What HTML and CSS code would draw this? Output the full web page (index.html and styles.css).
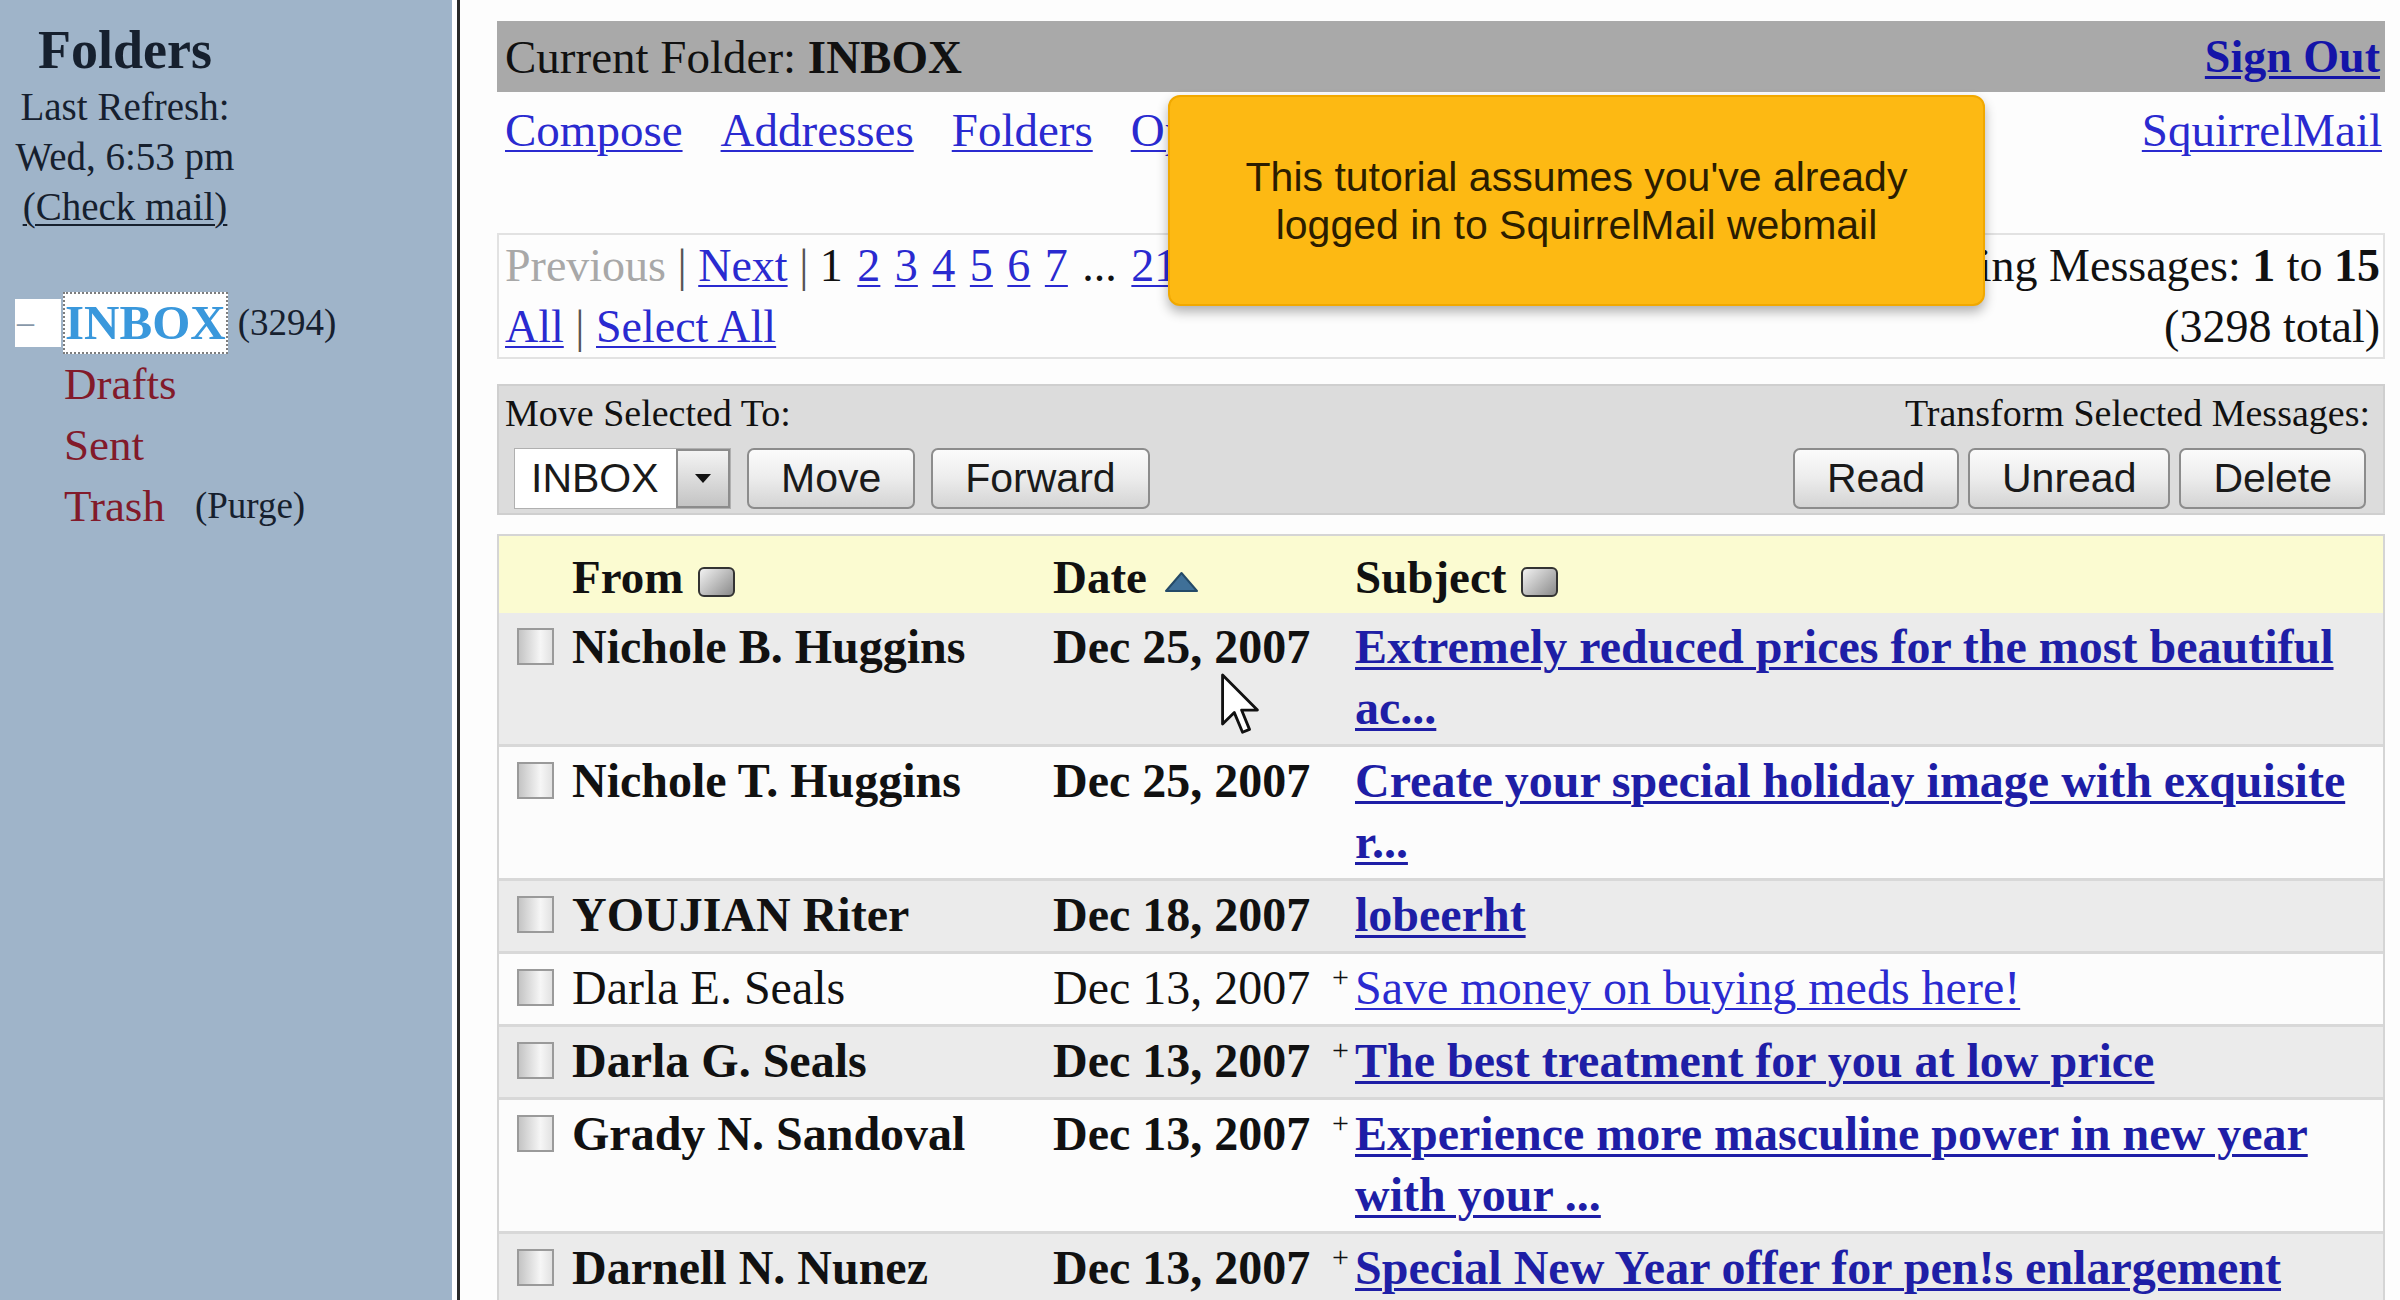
FILE: index.html
```html
<!DOCTYPE html>
<html lang="en">

<head>
    <meta charset="UTF-8">
    <title>SquirrelMail - INBOX</title>
    <link rel="stylesheet" href="styles.css">
</head>

<body>
    <div class="sidebar">
        <div class="sidebar-head">
            <div class="sidebar-title">Folders</div>
            <div class="sidebar-line">Last Refresh:</div>
            <div class="sidebar-line">Wed, 6:53 pm</div>
            <div class="sidebar-line"><a class="check" href="#">(Check mail)</a></div>
        </div>

        <div class="folders">
            <div class="folder folder-current">
                <span class="collapse">&ndash;</span>
                <span class="inbox">INBOX</span>
                <span class="count">(3294)</span>
            </div>
            <div class="folder">Drafts</div>
            <div class="folder">Sent</div>
            <div class="folder">Trash <span class="count purge">(Purge)</span></div>
        </div>
    </div>
    <div class="rule"></div>

    <div class="main">
        <div class="titlebar">
            <span>Current Folder: <b>INBOX</b></span>
            <a class="signout" href="#">Sign Out</a>
        </div>

        <div class="nav">
            <div class="nav-links">
                <a href="#">Compose</a>
                <a href="#">Addresses</a>
                <a href="#">Folders</a>
                <a href="#">Options</a>
                <a href="#">Search</a>
                <a href="#">Help</a>
            </div>
            <a href="#">SquirrelMail</a>
        </div>

        <div class="pager">
            <div class="pager-left">
                <span class="dim">Previous</span> <span class="sep">|</span> <a href="#">Next</a> <span class="sep">|</span>
                <span class="pages">1 <a href="#">2</a> <a href="#">3</a> <a href="#">4</a> <a href="#">5</a> <a href="#">6</a> <a href="#">7</a>
                ... <a href="#">219</a></span> <span class="sep">|</span> <a href="#">Show</a><br>
                <a href="#">All</a> <span class="sep">|</span> <a href="#">Select All</a>
            </div>
            <div class="pager-right">
                Viewing Messages: <b>1</b> to <b>15</b><br>
                (3298 total)
            </div>
        </div>

        <div class="actions">
            <div class="actions-left">
                <div class="label">Move Selected To:</div>
                <div class="controls">
                    <div class="select">
                        <span class="select-value">INBOX</span>
                        <span class="select-arrow"><span class="caret"></span></span>
                    </div>
                    <button>Move</button>
                    <button>Forward</button>
                </div>
            </div>
            <div class="actions-right">
                <div class="label">Transform Selected Messages:</div>
                <div class="controls controls-right">
                    <button>Read</button>
                    <button>Unread</button>
                    <button>Delete</button>
                </div>
            </div>
        </div>

        <div class="msglist">
            <div class="row head">
                <div></div>
                <div>From <span class="sort-box"></span></div>
                <div>Date <svg class="sort-up" width="37" height="24" viewBox="0 0 37 24"><polygon points="18.5,3 34,21 3,21" fill="#3f7098" stroke="#244a68" stroke-width="2" stroke-linejoin="round"/></svg></div>
                <div>Subject <span class="sort-box"></span></div>
            </div>

            <div class="row odd unseen">
                <div><span class="cb"></span></div>
                <div>Nichole B. Huggins</div>
                <div>Dec 25, 2007</div>
                <div><a href="#">Extremely reduced prices for the most beautiful ac...</a></div>
            </div>
            <div class="row even unseen">
                <div><span class="cb"></span></div>
                <div>Nichole T. Huggins</div>
                <div>Dec 25, 2007</div>
                <div><a href="#">Create your special holiday image with exquisite r...</a></div>
            </div>
            <div class="row odd unseen">
                <div><span class="cb"></span></div>
                <div>YOUJIAN Riter</div>
                <div>Dec 18, 2007</div>
                <div><a href="#">lobeerht</a></div>
            </div>
            <div class="row even">
                <div><span class="cb"></span></div>
                <div>Darla E. Seals</div>
                <div>Dec 13, 2007<span class="att">+</span></div>
                <div><a href="#">Save money on buying meds here!</a></div>
            </div>
            <div class="row odd unseen">
                <div><span class="cb"></span></div>
                <div>Darla G. Seals</div>
                <div>Dec 13, 2007<span class="att">+</span></div>
                <div><a href="#">The best treatment for you at low price</a></div>
            </div>
            <div class="row even unseen">
                <div><span class="cb"></span></div>
                <div>Grady N. Sandoval</div>
                <div>Dec 13, 2007<span class="att">+</span></div>
                <div><a href="#">Experience more masculine power in new year with your ...</a></div>
            </div>
            <div class="row odd unseen">
                <div><span class="cb"></span></div>
                <div>Darnell N. Nunez</div>
                <div>Dec 13, 2007<span class="att">+</span></div>
                <div><a href="#">Special New Year offer for pen!s enlargement</a></div>
            </div>
        </div>
    </div>

    <!-- tutorial callout over the page -->
    <div class="tip">This tutorial assumes you've already<br>logged in to SquirrelMail webmail</div>

    <svg class="pointer" width="38" height="64" viewBox="0 0 12 20">
        <path d="M0.5,0.5 L0.5,16 L4.2,12.4 L6.8,18.6 L9,17.7 L6.5,11.6 L11.5,11.6 Z" fill="#fff" stroke="#111" stroke-width="0.9" stroke-linejoin="round"/>
    </svg>
</body>

</html>
```

FILE: styles.css
```css
body {
    margin: 0;
    height: 1300px;
    overflow: hidden;
    display: flex;
    background: #fdfdfd;
    font-family: "Liberation Serif", "Times New Roman", serif;
    color: #111;
}

a {
    color: #2a2ad0;
    text-decoration: underline;
    text-decoration-thickness: 2px;
    text-underline-offset: 4px;
}

/* left frame */

.sidebar {
    width: 452px;
    flex: none;
    background: #9fb4c9;
    border-right: 5px solid #fff;
    color: #16202e;
}

.rule {
    width: 3px;
    flex: none;
    background: #2a2a2a;
}

.sidebar-head {
    width: 250px;
    text-align: center;
    padding-top: 20px;
}

.sidebar-title {
    font-size: 54px;
    font-weight: bold;
    line-height: 60px;
    margin-bottom: 2px;
}

.sidebar-line {
    font-size: 39px;
    line-height: 50px;
}

.check {
    color: #16202e;
}

.folders {
    margin-top: 60px;
}

.folder {
    display: flex;
    align-items: center;
    height: 61px;
    padding-left: 64px;
    font-size: 45px;
    color: #821a2a;
}

.folder-current {
    padding-left: 15px;
}

.collapse {
    width: 46px;
    height: 48px;
    line-height: 46px;
    background: #fff;
    color: #8797a8;
    font-size: 34px;
    padding-left: 2px;
    box-sizing: border-box;
}

.inbox {
    margin-left: 2px;
    border: 2px dotted #7d7d7d;
    background: #fff;
    color: #3a98dc;
    font-weight: bold;
    font-size: 49px;
    line-height: 58px;
}

.count {
    margin-left: 10px;
    font-size: 37px;
    color: #16202e;
}

.purge {
    margin-left: 30px;
}

/* right frame */

.main {
    flex: 1;
    padding: 21px 15px 0 37px;
}

.titlebar {
    display: flex;
    justify-content: space-between;
    align-items: center;
    height: 71px;
    padding: 0 5px 0 8px;
    background: #a9a9a9;
    font-size: 47px;
}

.signout {
    font-weight: bold;
    font-size: 46px;
    color: #1414a8;
    text-decoration-thickness: 3px;
}

.nav {
    display: flex;
    justify-content: space-between;
    height: 56px;
    line-height: 56px;
    padding: 10px 3px 0 8px;
    margin-bottom: 75px;
    font-size: 47px;
}

.nav-links {
    display: flex;
    gap: 38px;
}

.pager {
    display: flex;
    justify-content: space-between;
    border: 2px solid #e2e2e2;
    padding: 0 3px 0 6px;
    font-size: 46px;
    line-height: 61px;
}

.pages {
    word-spacing: 3px;
}

.pager-right {
    text-align: right;
}

.dim {
    color: #a8a8a8;
}

.sep {
    color: #555;
}

.actions {
    display: flex;
    justify-content: space-between;
    margin-top: 25px;
    padding: 4px 13px 4px 6px;
    background: #dcdcdc;
    border: 2px solid #cfcfcf;
}

.label {
    font-size: 38px;
    line-height: 46px;
}

.actions-right {
    text-align: right;
}

.controls {
    display: flex;
    gap: 16px;
    margin-top: 12px;
    margin-left: 9px;
}

.controls-right {
    gap: 9px;
    justify-content: flex-end;
    margin-right: 4px;
}

button {
    height: 61px;
    padding: 0 32px;
    border: 2px solid #8c8c8c;
    border-radius: 7px;
    background: linear-gradient(#fbfbfb, #ececec 50%, #d4d4d4);
    font-family: "Liberation Sans", Arial, sans-serif;
    font-size: 41px;
    color: #1a1a1a;
}

.select {
    display: flex;
    height: 61px;
    border: 1px solid #b0b0b0;
    background: #fff;
    box-sizing: border-box;
    font-family: "Liberation Sans", Arial, sans-serif;
    font-size: 41px;
}

.select-value {
    width: 161px;
    padding-left: 16px;
    line-height: 59px;
    box-sizing: border-box;
    color: #1a1a1a;
}

.select-arrow {
    width: 54px;
    display: flex;
    align-items: center;
    justify-content: center;
    border: 2px solid #8c8c8c;
    background: linear-gradient(#f4f4f4, #c4c4c4);
    box-sizing: border-box;
}

.caret {
    width: 0;
    height: 0;
    border-left: 8px solid transparent;
    border-right: 8px solid transparent;
    border-top: 9px solid #111;
}

/* message list */

.msglist {
    margin-top: 19px;
    border: 2px solid #d5d5d5;
    border-bottom: none;
}

.row {
    display: grid;
    grid-template-columns: 69px 481px 302px 1fr;
    font-size: 48px;
    line-height: 61px;
    padding: 3px 0 6px;
    border-bottom: 3px solid #d8d8d8;
}

.row > div + div {
    padding-left: 4px;
}

.row > div:last-child {
    padding-right: 4px;
}

.head {
    background: #fbfbd1;
    font-weight: bold;
    font-size: 47px;
    padding: 11px 0 5px;
    border-bottom: none;
}

.odd {
    background: #ebebeb;
}

.even {
    background: #fcfcfc;
}

.unseen {
    font-weight: bold;
}

.row a {
    color: #2a2ad0;
}

.unseen a {
    color: #1e1ea6;
    text-decoration-thickness: 3px;
}

.sort-box {
    display: inline-block;
    width: 33px;
    height: 26px;
    margin-left: 3px;
    vertical-align: middle;
    border: 2px solid #333;
    border-radius: 6px;
    background: linear-gradient(135deg, #f2f2f2, #8a8a8a);
}

.sort-up {
    margin-left: 4px;
    vertical-align: middle;
}

.cb {
    display: block;
    width: 33px;
    height: 33px;
    margin: 12px 0 0 18px;
    border: 2px solid #9a9a9a;
    background: linear-gradient(90deg, #c4c4c4, #f6f6f6 65%, #e2e2e2);
}

.att {
    float: right;
    margin-right: 2px;
    font-size: 30px;
    line-height: 40px;
    font-weight: normal;
}

/* overlays */

.tip {
    position: absolute;
    left: 1168px;
    top: 95px;
    width: 817px;
    height: 211px;
    box-sizing: border-box;
    display: flex;
    align-items: center;
    justify-content: center;
    text-align: center;
    background: #fdb913;
    border: 2px solid #f1a800;
    border-radius: 12px;
    box-shadow: 0 6px 12px rgba(0, 0, 0, 0.3);
    font-family: "Liberation Sans", Arial, sans-serif;
    font-size: 41px;
    line-height: 48px;
    color: #2b1d00;
}

.pointer {
    position: absolute;
    left: 1221px;
    top: 673px;
}
```
